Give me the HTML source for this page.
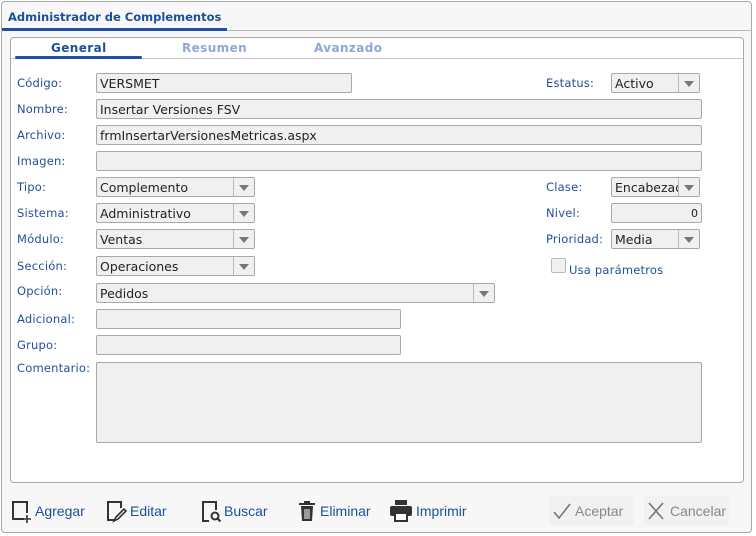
<!DOCTYPE html><html><head><style>
*{box-sizing:border-box}
body{margin:0;width:756px;height:536px;background:#fff;font-family:"DejaVu Sans",Verdana,sans-serif;position:relative;overflow:hidden}
.a{position:absolute}
.outer{left:1px;top:1px;width:751px;height:532px;border:1px solid #a8a8a8;border-radius:4px;background:#f7f7f7}
.inner{left:10px;top:37px;width:734px;height:446px;border:1px solid #a8a8a8;border-radius:4px;background:#fff}
.lbl{font-size:11.5px;color:#1f4f9c;left:17px;letter-spacing:.2px}
.in{border:1px solid #a9a9a9;border-radius:2px;background:#f0f0f0;height:20px;font-size:12.5px;color:#222;padding:1px 0 0 3px;line-height:17px;white-space:nowrap;overflow:hidden}
.sel::after{content:"";position:absolute;right:0;top:0;width:20px;height:18px;border-left:1px solid #bbb;background:#f0f0f0}
.sel::before{content:"";position:absolute;right:5px;top:7px;border-left:5px solid transparent;border-right:5px solid transparent;border-top:6px solid #777;z-index:2}
.tab{font-size:12px;font-weight:bold;top:41px;letter-spacing:.4px}
.btn{font-family:"Liberation Sans",Arial,sans-serif;font-size:14px;color:#1d4f9a;top:503px}
</style></head><body>
<div class="a outer"></div>
<div class="a" style="left:8px;top:10px;font-size:11.5px;font-weight:bold;color:#1d4f9a">Administrador de Complementos</div>
<div class="a" style="left:1px;top:30px;width:751px;height:1px;background:#bbb"></div>
<div class="a" style="left:2px;top:28px;width:225px;height:3px;background:#1f4fa0"></div>
<div class="a inner"></div>
<div class="a" style="left:11px;top:58px;width:732px;height:1px;background:#c8c8c8"></div>
<div class="a" style="left:15px;top:56px;width:127px;height:3px;background:#1f4fa0;border-radius:2px"></div>
<div class="a tab" style="left:51px;color:#1d4f9a">General</div>
<div class="a tab" style="left:182px;color:#8ea8d6">Resumen</div>
<div class="a tab" style="left:314px;color:#8ea8d6">Avanzado</div>

<div class="a lbl" style="top:76px">Código:</div>
<div class="a lbl" style="top:102px">Nombre:</div>
<div class="a lbl" style="top:128px">Archivo:</div>
<div class="a lbl" style="top:154px">Imagen:</div>
<div class="a lbl" style="top:180px">Tipo:</div>
<div class="a lbl" style="top:206px">Sistema:</div>
<div class="a lbl" style="top:232px">Módulo:</div>
<div class="a lbl" style="top:259px">Sección:</div>
<div class="a lbl" style="top:284px">Opción:</div>
<div class="a lbl" style="top:312px">Adicional:</div>
<div class="a lbl" style="top:338px">Grupo:</div>
<div class="a lbl" style="top:361px">Comentario:</div>
<div class="a lbl" style="left:546px;top:76px">Estatus:</div>
<div class="a lbl" style="left:546px;top:180px">Clase:</div>
<div class="a lbl" style="left:546px;top:206px">Nivel:</div>
<div class="a lbl" style="left:546px;top:232px">Prioridad:</div>

<div class="a in" style="left:96px;top:73px;width:256px">VERSMET</div>
<div class="a in" style="left:96px;top:99px;width:606px">Insertar Versiones FSV</div>
<div class="a in" style="left:96px;top:125px;width:606px">frmInsertarVersionesMetricas.aspx</div>
<div class="a in" style="left:96px;top:151px;width:606px"></div>
<div class="a in sel" style="left:96px;top:177px;width:159px">Complemento</div>
<div class="a in sel" style="left:96px;top:203px;width:159px">Administrativo</div>
<div class="a in sel" style="left:96px;top:229px;width:159px">Ventas</div>
<div class="a in sel" style="left:96px;top:256px;width:159px">Operaciones</div>
<div class="a in sel" style="left:96px;top:283px;width:399px">Pedidos</div>
<div class="a in" style="left:96px;top:309px;width:305px"></div>
<div class="a in" style="left:96px;top:335px;width:305px"></div>
<div class="a in" style="left:96px;top:362px;width:606px;height:81px"></div>
<div class="a in sel" style="left:611px;top:73px;width:89px">Activo</div>
<div class="a in sel" style="left:611px;top:177px;width:89px">Encabezado</div>
<div class="a in" style="left:611px;top:203px;width:91px;text-align:right;padding-right:3px;font-size:11px">0</div>
<div class="a in sel" style="left:611px;top:229px;width:89px">Media</div>
<div class="a" style="left:551px;top:258px;width:15px;height:15px;border:1px solid #bbb;background:#f0f0f0;border-radius:2px"></div>
<div class="a lbl" style="left:569px;top:263px">Usa parámetros</div>

<svg class="a" style="left:11px;top:500px" width="20" height="24" viewBox="0 0 20 24" fill="none" stroke="#333" stroke-width="2"><path d="M13 19H2V2h14v11"/><path d="M16 15v8M12 19h8" stroke-width="1.6"/></svg>
<div class="a btn" style="left:35px">Agregar</div>
<svg class="a" style="left:106px;top:500px" width="22" height="24" viewBox="0 0 22 24" fill="none" stroke="#333" stroke-width="2"><path d="M9 20H2V2h13v6"/><path d="M8 21l2-4 8-8 2 2-8 8z" stroke-width="1.6"/></svg>
<div class="a btn" style="left:130px">Editar</div>
<svg class="a" style="left:201px;top:500px" width="22" height="24" viewBox="0 0 22 24" fill="none" stroke="#333" stroke-width="2"><path d="M8 21H2V2h13v8"/><circle cx="14" cy="16" r="3.5"/><path d="M16.5 18.5l3 3"/></svg>
<div class="a btn" style="left:224px">Buscar</div>
<svg class="a" style="left:297px;top:500px" width="20" height="24" viewBox="0 0 20 24"><rect x="2" y="3" width="16" height="2" fill="#333"/><rect x="7" y="1" width="6" height="3" fill="#333"/><path d="M4 6h12l-1 15H5z" fill="#333"/><path d="M8 9v10M10 9v10M12 9v10" stroke="#fff" stroke-width="1"/></svg>
<div class="a btn" style="left:320px">Eliminar</div>
<svg class="a" style="left:390px;top:500px" width="22" height="22" viewBox="0 0 22 22"><rect x="5" y="0" width="12" height="5" fill="#333"/><rect x="0" y="6" width="22" height="10" rx="2" fill="#333"/><rect x="5" y="13" width="12" height="8" fill="#fff" stroke="#333" stroke-width="2"/></svg>
<div class="a btn" style="left:416px">Imprimir</div>
<div class="a" style="left:549px;top:496px;width:85px;height:29px;background:#f1f1f1;border-radius:2px"></div>
<div class="a" style="left:644px;top:496px;width:85px;height:29px;background:#f1f1f1;border-radius:2px"></div>
<svg class="a" style="left:553px;top:502px" width="18" height="18" viewBox="0 0 18 18" fill="none" stroke="#777" stroke-width="1.6"><path d="M1 10l5 6L17 2"/></svg>
<div class="a btn" style="left:575px;color:#888">Aceptar</div>
<svg class="a" style="left:648px;top:502px" width="16" height="18" viewBox="0 0 16 18" fill="none" stroke="#777" stroke-width="1.6"><path d="M1 1l14 16M15 1L1 17"/></svg>
<div class="a btn" style="left:670px;color:#888">Cancelar</div>
</body></html>
